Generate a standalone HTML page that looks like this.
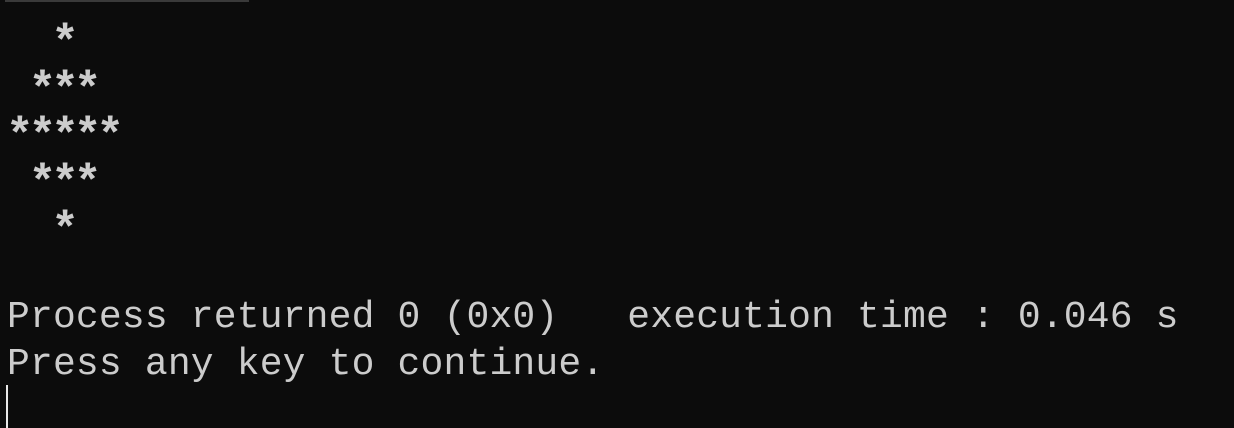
<!DOCTYPE html>
<html><head><meta charset="utf-8"><style>
html,body{margin:0;padding:0;background:#0c0c0c;width:1234px;height:428px;overflow:hidden}
.bar{position:absolute;left:5px;top:0;width:244px;height:2px;background:#3a3a3a}
pre{position:absolute;margin:0;font-family:"Liberation Mono",monospace;color:#cccccc}
.t{left:7px;top:15px;font-size:38px;line-height:46.7px;letter-spacing:0.17px}
.s{left:6px;top:21px;font-size:46px;line-height:46.7px;letter-spacing:-5px;font-weight:bold}
.cur{position:absolute;left:6px;top:385px;width:2px;height:43px;background:#e8e8e8}
</style></head><body>
<div class="bar"></div>
<pre class="s">  *
 ***
*****
 ***
  *</pre>
<pre class="t">






Process returned 0 (0x0)   execution time : 0.046 s
Press any key to continue.</pre>
<div class="cur"></div>
</body></html>
